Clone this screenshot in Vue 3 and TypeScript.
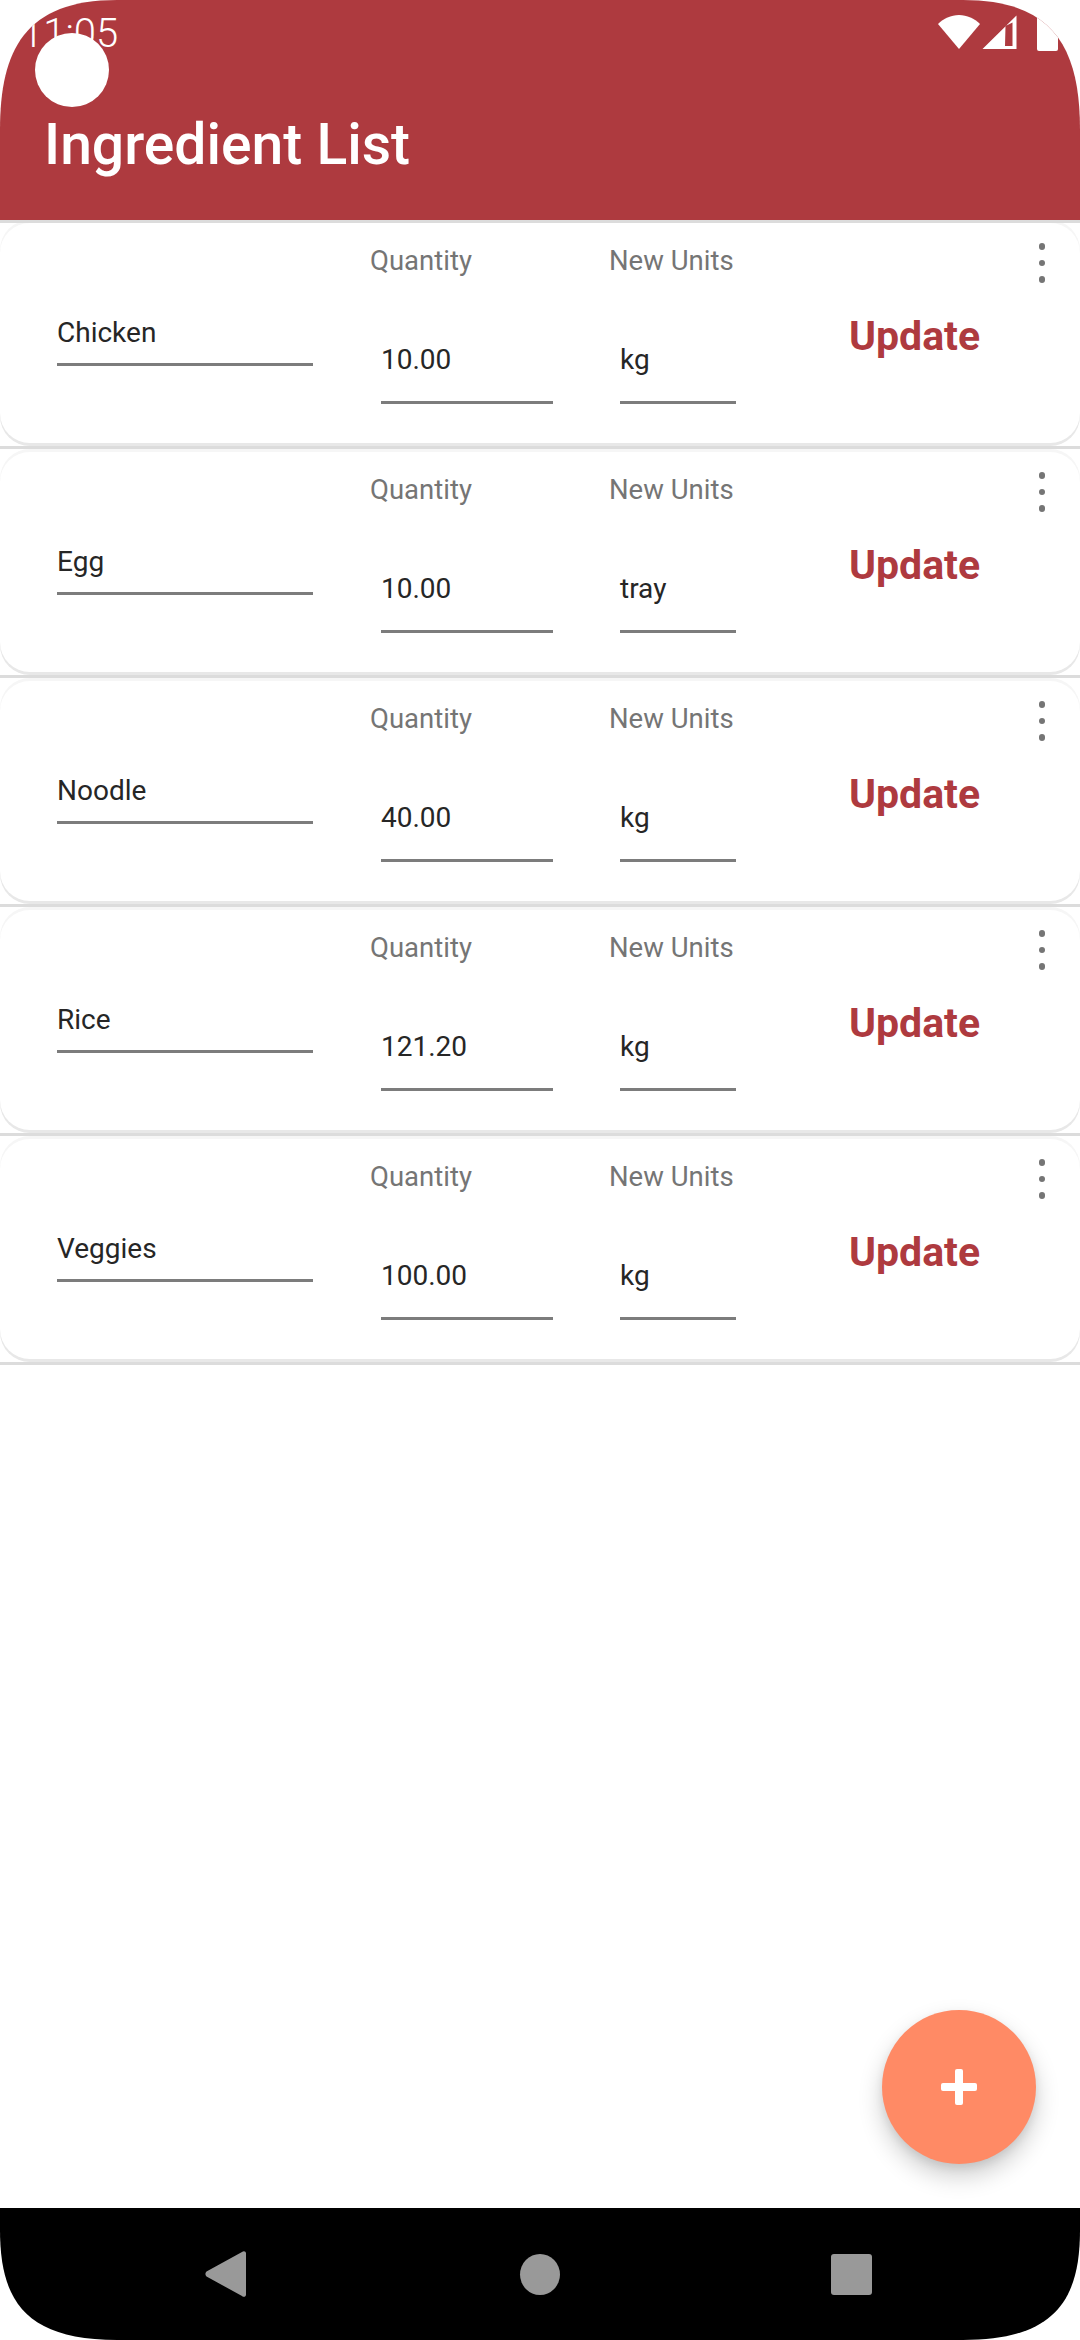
<template>
  <div class="screen">
    <header class="appbar">
      <div class="status">
        <span class="status__time">11:05</span>
        <div class="status__icons">
          <svg class="status__wifi" viewBox="0 0 42 34" width="42" height="34">
            <path d="M0 9C5.500 3.500 13 0 21 0S36.500 3.500 42 9L21 34Z" fill="#fff" />
          </svg>
          <svg class="status__signal" viewBox="0 0 35 35" width="35" height="35">
            <path fill-rule="evenodd" d="M34.500 0.500V34H0.500ZM23.500 11L23 31H30.500V7.500Z" fill="#fff" />
          </svg>
          <div class="status__battery"></div>
        </div>
      </div>
      <h1 class="appbar__title">Ingredient List</h1>
      <div class="appbar__dot"></div>
    </header>

    <main class="list">
      <section v-for="item in ingredients" :key="item.name" class="card">
        <div class="card__name">
          <div class="field">{{ item.name }}</div>
        </div>
        <div class="card__col card__col--qty">
          <div class="card__label">Quantity</div>
          <div class="field field--value">{{ item.quantity }}</div>
        </div>
        <div class="card__col card__col--units">
          <div class="card__label">New Units</div>
          <div class="field field--value">{{ item.units }}</div>
        </div>
        <button class="card__update" type="button">Update</button>
        <div class="card__menu">
          <span></span>
          <span></span>
          <span></span>
        </div>
      </section>
    </main>

    <button class="fab" type="button">
      <svg viewBox="0 0 36 36" width="36" height="36" fill="#fff">
        <rect x="14" y="0" width="8" height="36" rx="2" />
        <rect x="0" y="14" width="36" height="8" rx="2" />
      </svg>
    </button>

    <nav class="navbar">
      <svg viewBox="0 0 41 46" width="41" height="46">
        <path d="M37 1C38.500 -0.500 41 0 41 2.500V43.500C41 46 38.500 46.500 37 45L1.500 25.500C0 24 0 22 1.500 20.500Z" fill="#999" />
      </svg>
      <div class="navbar__home"></div>
      <div class="navbar__recent"></div>
    </nav>
  </div>
</template>

<script setup lang="ts">
interface Ingredient {
  name: string
  quantity: string
  units: string
}

const ingredients: Ingredient[] = [
  { name: 'Chicken', quantity: '10.00', units: 'kg' },
  { name: 'Egg', quantity: '10.00', units: 'tray' },
  { name: 'Noodle', quantity: '40.00', units: 'kg' },
  { name: 'Rice', quantity: '121.20', units: 'kg' },
  { name: 'Veggies', quantity: '100.00', units: 'kg' }
]
</script>

<style>
html,
body {
  margin: 0;
  background: #fff;
}
</style>

<style scoped>
.screen {
  position: relative;
  display: flex;
  flex-direction: column;
  width: 1080px;
  height: 2340px;
  overflow: hidden;
  background: #fff;
  font-family: Roboto, "Liberation Sans", sans-serif;
}

.appbar {
  position: relative;
  z-index: 1;
  flex: none;
  height: 223px;
  box-sizing: border-box;
  background: linear-gradient(#ae3a3f 220px, #dcdcdc 220px);
  /* the phone's rounded screen corners */
  clip-path: path("M0 130C0 50 25 0 117 0H963C1055 0 1080 50 1080 130V223H0Z");
}

.status {
  display: flex;
  justify-content: space-between;
  height: 72px;
  padding-left: 21px;
}

.status__time {
  margin-top: 11px;
  height: 46px;
  font-size: 40px;
  line-height: 46px;
  font-weight: 300;
  color: #fff;
}

.status__icons {
  display: flex;
  align-items: flex-start;
  margin-top: 15px;
  padding-right: 22px;
}

.status__wifi {
  margin-right: 2px;
}

.status__signal {
  margin-right: 20px;
}

.status__battery {
  width: 21px;
  height: 33px;
  margin-top: 3px;
  background: #fff;
  border-radius: 0 0 2px 2px;
}

.appbar__title {
  margin: 41px 0 0 44px;
  font-size: 57px;
  line-height: 64px;
  font-weight: 500;
  color: #fff;
}

.appbar__dot {
  position: absolute;
  left: 35px;
  top: 33px;
  width: 74px;
  height: 74px;
  border-radius: 50%;
  background: #fff;
}

.list {
  flex: 1;
}

.card {
  position: relative;
  display: flex;
  align-items: flex-start;
  box-sizing: border-box;
  height: 220px;
  margin-bottom: 9px;
  padding-left: 57px;
  background: #fff;
  border-radius: 30px;
  box-shadow: 0 3px 0 #e8e8e8, 0 -3px 0 #f6f6f6;
}

.card::after {
  content: "";
  position: absolute;
  left: 0;
  right: 0;
  bottom: -6px;
  height: 3px;
  background: #dcdcdc;
}

.card__name {
  width: 256px;
  margin-top: 91px;
}

.field {
  height: 52px;
  box-sizing: border-box;
  border-bottom: 3px solid #7c7c7c;
  font-size: 28px;
  line-height: 38px;
  color: #262626;
}

.card__col--qty {
  width: 172px;
  margin-left: 68px;
}

.card__col--units {
  width: 116px;
  margin-left: 67px;
}

.card__label {
  margin: 20px 0 0 -11px;
  height: 36px;
  font-size: 27.500px;
  line-height: 36px;
  color: #757575;
  white-space: nowrap;
}

.field--value {
  height: 125px;
  padding: 61px 0 0;
  line-height: 40px;
}

.card__update {
  margin: 91px 0 0 113px;
  padding: 0;
  border: 0;
  background: none;
  font-family: inherit;
  font-size: 41px;
  line-height: 44px;
  font-weight: 700;
  color: #ae3a3f;
}

.card__menu {
  position: absolute;
  top: 20px;
  right: 35px;
  display: flex;
  flex-direction: column;
  gap: 10px;
}

.card__menu span {
  width: 6.500px;
  height: 6.500px;
  border-radius: 50%;
  background: #757575;
}

.fab {
  position: absolute;
  left: 882px;
  top: 2010px;
  display: flex;
  align-items: center;
  justify-content: center;
  width: 154px;
  height: 154px;
  padding: 0;
  border: 0;
  border-radius: 50%;
  background: #ff8a65;
  box-shadow: 0 12px 24px rgba(0, 0, 0, 0.2), 0 4px 8px rgba(0, 0, 0, 0.08);
}

.navbar {
  flex: none;
  display: flex;
  align-items: center;
  justify-content: space-between;
  box-sizing: border-box;
  height: 132px;
  padding: 0 208px 0 205px;
  background: #000;
  clip-path: path("M0 0H1080V22C1080 92 1055 132 963 132H117C25 132 0 92 0 22Z");
}

.navbar__home {
  width: 40px;
  height: 41px;
  margin-left: 3px;
  border-radius: 50%;
  background: #999;
}

.navbar__recent {
  width: 41px;
  height: 41px;
  border-radius: 3px;
  background: #999;
}
</style>
